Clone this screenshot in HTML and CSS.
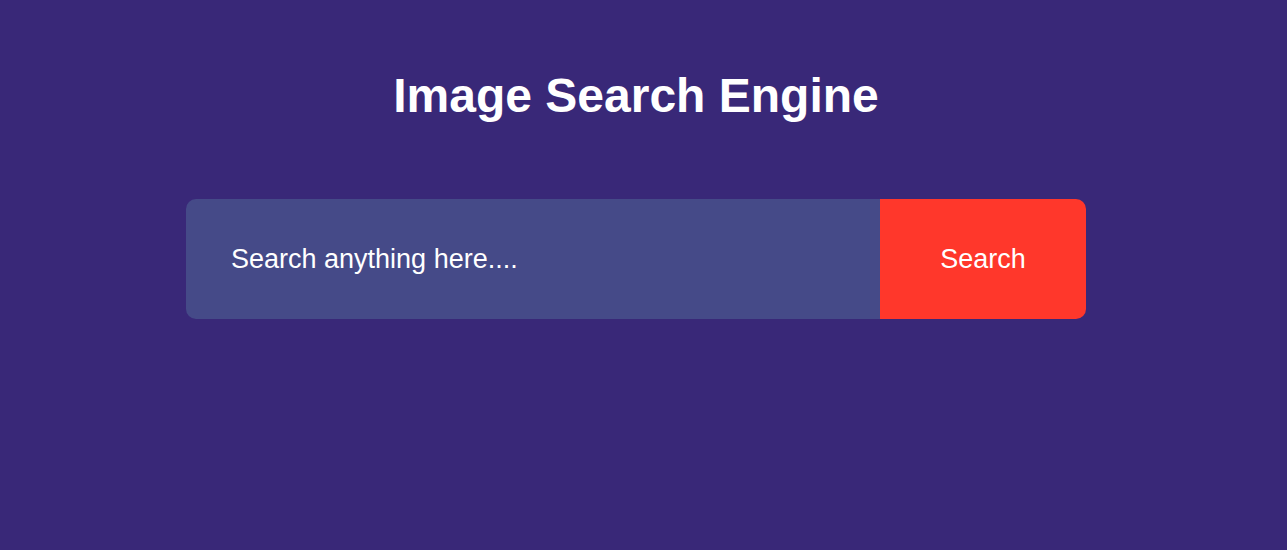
FILE: index.html
```html
<!DOCTYPE html>
<html lang="en">
<head>
<meta charset="utf-8">
<title>Image Search Engine</title>
<link rel="stylesheet" href="styles.css">
</head>
<body>
<main class="page">
  <h1 class="title">Image Search Engine</h1>
  <form class="search-form">
    <input class="search-input" type="text" placeholder="Search anything here....">
    <button class="search-btn" type="button">Search</button>
  </form>
</main>
</body>
</html>
```

FILE: styles.css
```css
* { box-sizing: border-box; }
html, body {
  margin: 0;
  padding: 0;
  height: 100%;
}
body {
  background: #392878;
  font-family: "Liberation Sans", Arial, sans-serif;
  color: #fff;
}
.page {
  display: flex;
  flex-direction: column;
  align-items: center;
  padding-top: 68px;
  padding-right: 15px;
}
.title {
  margin: 0;
  font-size: 48px;
  line-height: 56px;
  font-weight: 700;
  color: #fff;
}
.search-form {
  margin-top: 75px;
  width: 900px;
  height: 120px;
  display: flex;
  border-radius: 10px;
  overflow: hidden;
}
.search-input {
  flex: 1;
  border: none;
  outline: none;
  background: #454a88;
  color: #fff;
  font-family: inherit;
  font-size: 27px;
  padding: 0 45px;
}
.search-input::placeholder {
  color: #fff;
  opacity: 1;
}
.search-btn {
  width: 206px;
  border: none;
  background: #ff372b;
  color: #fff;
  font-family: inherit;
  font-size: 27px;
  cursor: pointer;
}
```
